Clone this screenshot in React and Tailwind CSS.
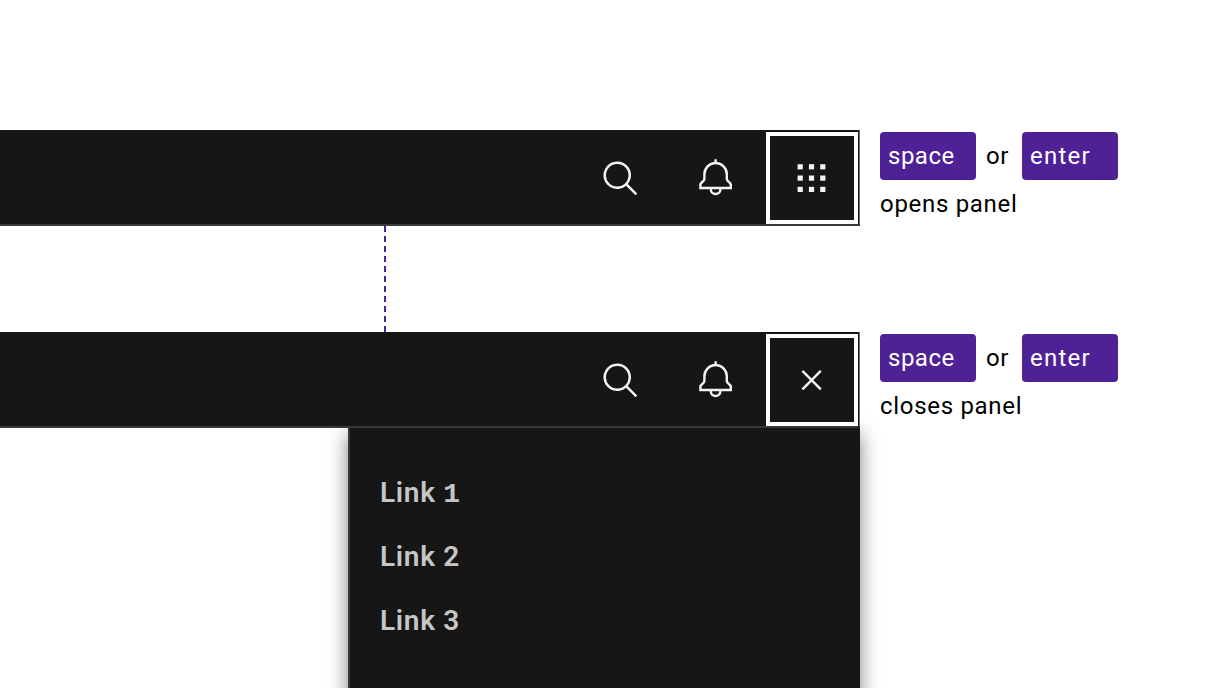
function SearchIcon() {
  return (
    <svg viewBox="0 0 32 32" className="size-10" fill="#f4f4f4">
      <path d="M29,27.5859l-7.5521-7.5521a11.0177,11.0177,0,1,0-1.4141,1.4141L27.5859,29ZM4,13a9,9,0,1,1,9,9A9.01,9.01,0,0,1,4,13Z" />
    </svg>
  );
}

function BellIcon() {
  return (
    <svg viewBox="0 0 40 40" className="size-10" fill="none" stroke="#f4f4f4" strokeWidth="2.4">
      <path d="M19.6 1.2V5M8.4 16.2a11.2 11.2 0 0 1 22.4 0v4.9c0 .5.2.9.5 1.2l3 3c.3.3.5.7.5 1.1V30H4.4V26.4c0-.4.2-.8.5-1.1l3-3c.3-.3.5-.7.5-1.2z" />
      <path d="M14.8 30v1.2a4.8 4.8 0 0 0 9.6 0V30" />
    </svg>
  );
}

const GRID = [5.6, 16.9, 28.2];

function SwitcherIcon() {
  return (
    <svg viewBox="0 0 40 40" className="size-10" fill="#f4f4f4">
      {GRID.map((y) => GRID.map((x) => <rect key={`${x}-${y}`} x={x} y={y + 0.6} width="5.2" height="5.2" />))}
    </svg>
  );
}

function CloseIcon() {
  return (
    <svg viewBox="0 0 40 40" className="size-10" fill="none" stroke="#f4f4f4" strokeWidth="2.4">
      <path d="M10.4 10.9 28.8 29.3M28.8 10.9 10.4 29.3" />
    </svg>
  );
}

function HeaderBar({ children }) {
  return (
    <header className="relative z-10 flex h-24 w-[860px] justify-end border-b-2 border-[#393939] bg-[#161616]">
      <div className="flex w-24 items-center justify-center pt-1 pl-px">
        <SearchIcon />
      </div>
      <div className="flex w-24 items-center justify-center pt-0.5">
        <BellIcon />
      </div>
      <div className="flex w-24 border-r border-[#6f6f6f] pt-0.5 pl-0.5 pr-px">
        <button className="flex h-[92px] w-[92px] items-center justify-center border-4 border-white">
          {children}
        </button>
      </div>
    </header>
  );
}

function Key({ children }) {
  return (
    <kbd className="flex h-12 w-24 items-center rounded bg-[#4f2196] pl-2 font-[Roboto,sans-serif] font-[370] text-white">
      {children}
    </kbd>
  );
}

function Hint({ children }) {
  return (
    <div className="ml-5 pt-0.5 text-[24px] leading-[48px] font-normal text-black">
      <div className="flex">
        <Key><span className="tracking-[0.5px]">space</span></Key>
        <span className="w-[46px] pl-2.5 tracking-[0.64px]">or</span>
        <Key><span className="tracking-[1.25px]">enter</span></Key>
      </div>
      <p className="tracking-[0.7px]">{children}</p>
    </div>
  );
}

const LINKS = [1, 2, 3];

export default function App() {
  return (
    <main className="flex h-[688px] w-[1216px] flex-col overflow-hidden bg-white pt-[130px] font-[Roboto,sans-serif]">
      <section className="flex h-24 shrink-0">
        <HeaderBar><SwitcherIcon /></HeaderBar>
        <Hint>opens panel</Hint>
      </section>
      <div className="ml-96 h-[106px] w-0.5 shrink-0 bg-[repeating-linear-gradient(to_bottom,#4f2196_0_6px,transparent_6px_10px)]" />
      <section className="flex h-24 shrink-0">
        <HeaderBar><CloseIcon /></HeaderBar>
        <Hint>closes panel</Hint>
      </section>
      <nav className="ml-[348px] h-[400px] w-[512px] shrink-0 border-l-2 border-[#393939] bg-[#161616] pt-[33px] pl-[30px] shadow-[0_6px_18px_rgba(0,0,0,0.5)]">
        {LINKS.map((n) => (
          <a key={n} className="block h-16 text-[28px] leading-[64px] font-semibold tracking-[0.7px] text-[#c6c6c6]">
            Link {n === 1 ? <span className="font-['Liberation_Mono',monospace] leading-none">{n}</span> : n}
          </a>
        ))}
      </nav>
    </main>
  );
}
